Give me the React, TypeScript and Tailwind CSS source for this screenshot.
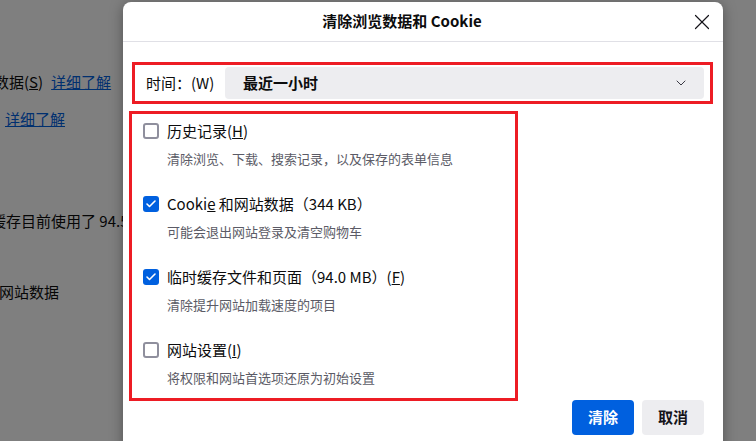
import React from 'react';
import { X, ChevronDown, Check } from 'lucide-react';

const FONT = { fontFamily: '"Noto Sans CJK SC", "Noto Sans", sans-serif' };

type Item = { label: React.ReactNode; desc: string; checked: boolean };

const items: Item[] = [
  {
    label: (
      <>
        历史记录(<u>H</u>)
      </>
    ),
    desc: '清除浏览、下载、搜索记录，以及保存的表单信息',
    checked: false,
  },
  {
    label: (
      <>
        Cooki<u>e</u> 和网站数据（344 KB）
      </>
    ),
    desc: '可能会退出网站登录及清空购物车',
    checked: true,
  },
  {
    label: (
      <>
        临时缓存文件和页面（94.0 MB）(<u>F</u>)
      </>
    ),
    desc: '清除提升网站加载速度的项目',
    checked: true,
  },
  {
    label: (
      <>
        网站设置(<u>I</u>)
      </>
    ),
    desc: '将权限和网站首选项还原为初始设置',
    checked: false,
  },
];

function Checkbox({ checked }: { checked: boolean }) {
  return checked ? (
    <span className="flex h-[16px] w-[16px] items-center justify-center rounded-[3px] bg-[#0060df]">
      <Check size={12} strokeWidth={3.2} className="text-white" />
    </span>
  ) : (
    <span className="h-[16px] w-[16px] rounded-[3px] border-2 border-[#8f8f9d] bg-white" />
  );
}

export default function App() {
  return (
    <div className="relative h-[441px] w-[756px] overflow-hidden bg-white text-[#0c0c0d]" style={FONT}>
      {/* page behind the dialog */}
      <div className="flex flex-col text-[15px]">
        <div className="mt-[71px] flex h-[22px] items-center -ml-[6px]">
          <span>数据(<u>S</u>)</span>
          <span className="ml-[8px] text-[#0060df] underline">详细了解</span>
        </div>
        <div className="mt-[15px] flex h-[22px] items-center pl-[5px]">
          <span className="text-[#0060df] underline">详细了解</span>
        </div>
        <div className="mt-[80px] flex h-[22px] items-center -ml-[9px] whitespace-nowrap">
          缓存目前使用了 94.5 MB 磁盘空间
        </div>
        <div className="mt-[49px] flex h-[22px] items-center -ml-[16px] whitespace-nowrap">
          和网站数据
        </div>
      </div>

      {/* dim overlay */}
      <div className="absolute inset-0 bg-black/50" />

      {/* dialog */}
      <div className="absolute left-[123px] top-[2px] flex h-[470px] w-[600px] flex-col rounded-[8px] bg-white shadow-[0_2px_14px_rgba(0,0,0,0.35)]">
        <div className="flex h-[40px] shrink-0 items-center border-b border-[#e0e0e6]">
          <div className="flex-1 text-center text-[15px] font-bold">清除浏览数据和 Cookie</div>
          <div className="flex w-[42px] items-center justify-center">
            <X size={26} strokeWidth={1.1} className="text-[#15141a]" />
          </div>
        </div>

        <div className="flex flex-col pl-[6px]">
          <div className="ml-[3px] mt-[20px] flex h-[42px] w-[581px] items-center border-[3px] border-[#ed1c24] pl-[11px] pr-[6px]">
            <span className="w-[79px] text-[15px]">时间：(W)</span>
            <div className="flex h-[32px] flex-1 items-center justify-between rounded-[4px] bg-[#ededf0] pl-[18px] pr-[15px]">
              <span className="text-[15px] font-bold">最近一小时</span>
              <ChevronDown size={16} strokeWidth={1.5} className="text-[#3a3944]" />
            </div>
          </div>

          <div className="mt-[7px] flex h-[290px] w-[389px] flex-col gap-[23px] border-[3px] border-[#ed1c24] pb-[10px] pl-[11px] pt-[5px]">
            {items.map((it, i) => (
              <div key={i} className="flex flex-col">
                <div className="flex h-[24px] items-center gap-[8px]">
                  <Checkbox checked={it.checked} />
                  <span className="text-[15px]">{it.label}</span>
                </div>
                <div className="mt-[6px] flex h-[20px] items-center pl-[24px] text-[13px] text-[#5b5b66]">
                  {it.desc}
                </div>
              </div>
            ))}
          </div>
        </div>

        <div className="-mt-[1px] flex justify-end gap-[8px] pr-[19px]">
          <button className="h-[35px] w-[62px] rounded-[4px] bg-[#0060df] text-[15px] font-bold text-white">
            清除
          </button>
          <button className="h-[35px] w-[62px] rounded-[4px] bg-[#ededf0] text-[15px] font-bold text-[#15141a]">
            取消
          </button>
        </div>
      </div>
    </div>
  );
}
